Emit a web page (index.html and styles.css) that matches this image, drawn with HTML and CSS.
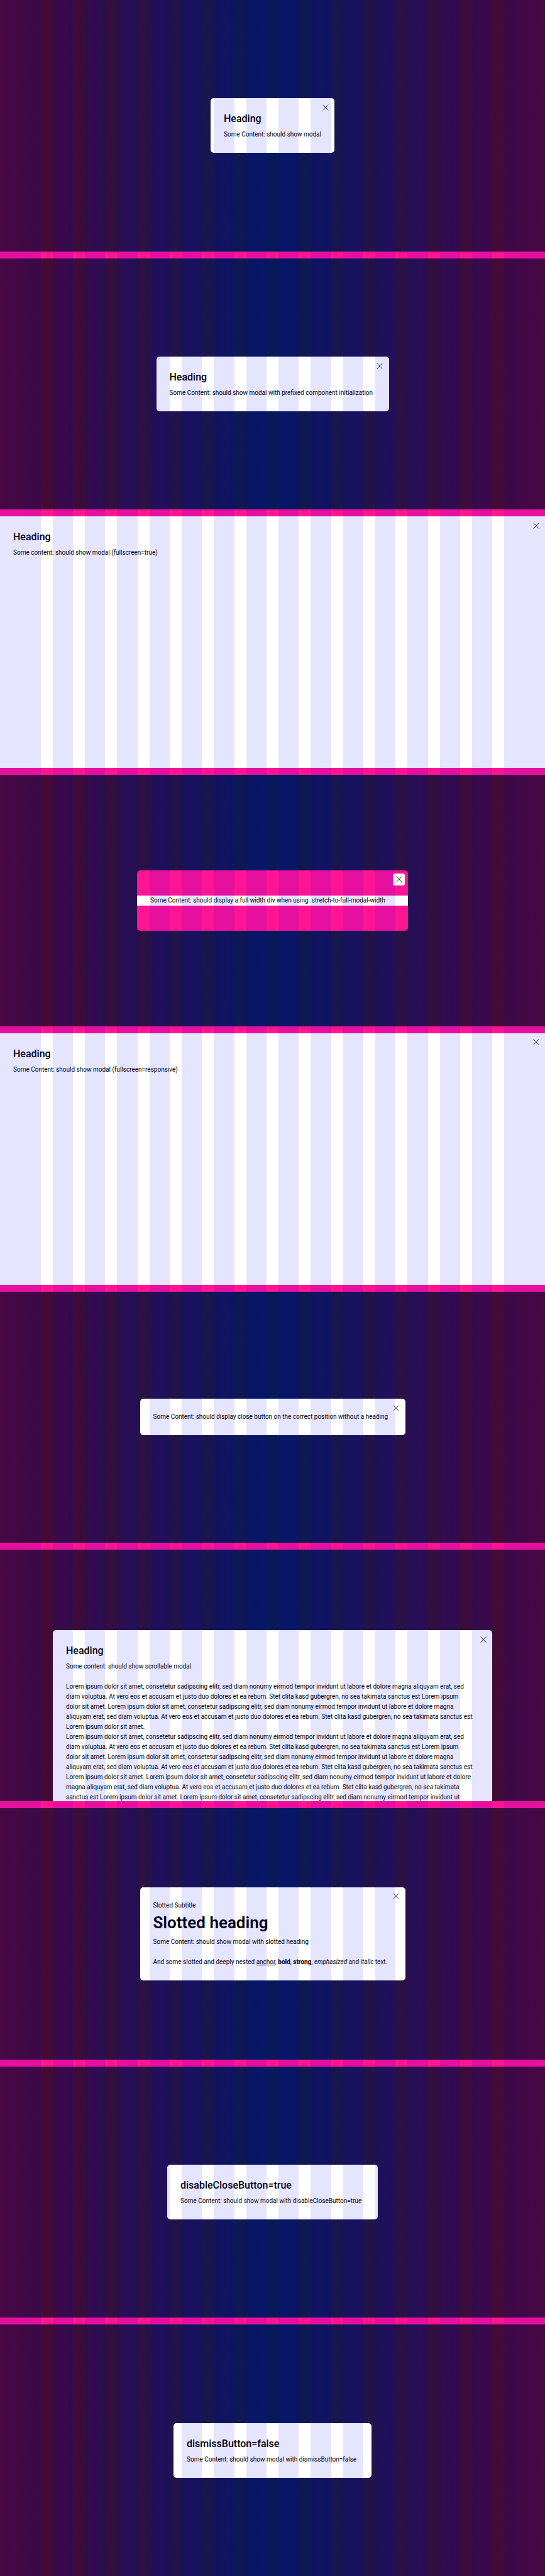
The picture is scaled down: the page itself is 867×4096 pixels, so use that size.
FILE: index.html
```html
<!DOCTYPE html>
<html lang="en">
<head>
<meta charset="utf-8">
<meta name="viewport" content="width=device-width, initial-scale=1">
<title>Modal overview</title>
<link rel="stylesheet" href="styles.css">
</head>
<body>
<svg class="sprite" aria-hidden="true"><symbol id="close" viewBox="0 0 10 10"><path d="M.7.5 9.3 9.5M9.3.5.7 9.5" fill="none" stroke="currentColor" stroke-width=".8"/></symbol></svg>
<main class="playground">
  <section class="stage">
    <div class="modal modal--xs" role="dialog" aria-label="Heading">
      <button class="close" type="button" aria-label="Close"><svg class="icon"><use href="#close"/></svg></button>
      <h2 class="heading">Heading</h2>
      <p class="text">Some Content: should show modal</p>
    </div>
  </section>
  <section class="stage">
    <div class="modal modal--m" role="dialog" aria-label="Heading">
      <button class="close" type="button" aria-label="Close"><svg class="icon"><use href="#close"/></svg></button>
      <h2 class="heading">Heading</h2>
      <p class="text">Some Content: should show modal with prefixed component initialization</p>
    </div>
  </section>
  <section class="stage stage--full">
    <div class="modal modal--full" role="dialog" aria-label="Heading">
      <button class="close" type="button" aria-label="Close"><svg class="icon"><use href="#close"/></svg></button>
      <h2 class="heading">Heading</h2>
      <p class="text">Some content: should show modal (fullscreen=true)</p>
    </div>
  </section>
  <section class="stage">
    <div class="modal modal--stretch" role="dialog" aria-label="Full width content">
      <button class="close" type="button" aria-label="Close"><svg class="icon"><use href="#close"/></svg></button>
      <p class="text text--stretch">Some Content: should display a full width div when using .stretch-to-full-modal-width</p>
    </div>
  </section>
  <section class="stage stage--full">
    <div class="modal modal--full" role="dialog" aria-label="Heading">
      <button class="close" type="button" aria-label="Close"><svg class="icon"><use href="#close"/></svg></button>
      <h2 class="heading">Heading</h2>
      <p class="text">Some Content: should show modal (fullscreen=responsive)</p>
    </div>
  </section>
  <section class="stage">
    <div class="modal modal--l" role="dialog" aria-label="Without heading">
      <button class="close" type="button" aria-label="Close"><svg class="icon"><use href="#close"/></svg></button>
      <p class="text">Some Content: should display close button on the correct position without a heading</p>
    </div>
  </section>
  <section class="stage stage--scroll">
    <div class="modal modal--scroll" role="dialog" aria-label="Heading">
      <button class="close" type="button" aria-label="Close"><svg class="icon"><use href="#close"/></svg></button>
      <h2 class="heading">Heading</h2>
      <p class="text">Some content: should show scrollable modal</p>
      <p class="text text--spaced">Lorem ipsum dolor sit amet, consetetur sadipscing elitr, sed diam nonumy eirmod tempor invidunt ut labore et dolore magna aliquyam erat, sed<br>
      diam voluptua. At vero eos et accusam et justo duo dolores et ea rebum. Stet clita kasd gubergren, no sea takimata sanctus est Lorem ipsum<br>
      dolor sit amet. Lorem ipsum dolor sit amet, consetetur sadipscing elitr, sed diam nonumy eirmod tempor invidunt ut labore et dolore magna<br>
      aliquyam erat, sed diam voluptua. At vero eos et accusam et justo duo dolores et ea rebum. Stet clita kasd gubergren, no sea takimata sanctus est<br>
      Lorem ipsum dolor sit amet.</p>
      <p class="text">Lorem ipsum dolor sit amet, consetetur sadipscing elitr, sed diam nonumy eirmod tempor invidunt ut labore et dolore magna aliquyam erat, sed<br>
      diam voluptua. At vero eos et accusam et justo duo dolores et ea rebum. Stet clita kasd gubergren, no sea takimata sanctus est Lorem ipsum<br>
      dolor sit amet. Lorem ipsum dolor sit amet, consetetur sadipscing elitr, sed diam nonumy eirmod tempor invidunt ut labore et dolore magna<br>
      aliquyam erat, sed diam voluptua. At vero eos et accusam et justo duo dolores et ea rebum. Stet clita kasd gubergren, no sea takimata sanctus est<br>
      Lorem ipsum dolor sit amet. Lorem ipsum dolor sit amet, consetetur sadipscing elitr, sed diam nonumy eirmod tempor invidunt ut labore et dolore<br>
      magna aliquyam erat, sed diam voluptua. At vero eos et accusam et justo duo dolores et ea rebum. Stet clita kasd gubergren, no sea takimata<br>
      sanctus est Lorem ipsum dolor sit amet. Lorem ipsum dolor sit amet, consetetur sadipscing elitr, sed diam nonumy eirmod tempor invidunt ut</p>
    </div>
  </section>
  <section class="stage">
    <div class="modal modal--l" role="dialog" aria-label="Slotted heading">
      <button class="close" type="button" aria-label="Close"><svg class="icon"><use href="#close"/></svg></button>
      <p class="text">Slotted Subtitle</p>
      <h2 class="heading heading--large">Slotted heading</h2>
      <p class="text">Some Content: should show modal with slotted heading</p>
      <p class="text text--spaced">And some slotted and deeply nested <a class="link" href="#">anchor</a>, <b>bold</b>, <strong>strong</strong>, <em>emphasized</em> and <i>italic</i> text.</p>
    </div>
  </section>
  <section class="stage">
    <div class="modal modal--s" role="dialog" aria-label="disableCloseButton=true">
      <h2 class="heading">disableCloseButton=true</h2>
      <p class="text">Some Content: should show modal with disableCloseButton=true</p>
    </div>
  </section>
  <section class="stage">
    <div class="modal modal--s2" role="dialog" aria-label="dismissButton=false">
      <h2 class="heading">dismissButton=false</h2>
      <p class="text">Some Content: should show modal with dismissButton=false</p>
    </div>
  </section>
  <div class="columns" aria-hidden="true"><i></i><i></i><i></i><i></i><i></i><i></i><i></i><i></i><i></i><i></i><i></i><i></i><i></i><i></i><i></i><i></i></div>
</main>
</body>
</html>
```

FILE: styles.css
```css
* { box-sizing: border-box; }

body {
  margin: 0;
  color: #010205;
  font: 10px/16px Roboto, "Liberation Sans", sans-serif;
}

.sprite { position: absolute; width: 0; height: 0; }

.playground {
  position: relative;
  display: grid;
  grid-template-rows: repeat(10, minmax(0, 1fr));
  gap: 11px;
  height: 100vh;
  background: #ff1493;
}

.stage {
  display: flex;
  align-items: center;
  justify-content: center;
  overflow: hidden;
  background: linear-gradient(to right, #4f082e, #061a57, #4f082e);
}

.stage--full { align-items: stretch; }

.stage--scroll {
  align-items: flex-start;
  padding: 128px 84px 0;
}

.modal {
  position: relative;
  padding: 21px;
  border-radius: 5px;
  background: #fff;
}

.modal--xs { min-width: 197px; }
.modal--s2 { min-width: 315px; }
.modal--s { min-width: 335px; }
.modal--m { min-width: 370px; }
.modal--l { min-width: 422px; }
.modal--full { flex: 1; border-radius: 0; }
.modal--scroll { flex: 1; }

.modal--stretch {
  min-width: 431px;
  padding: 40px 0;
  background: #ff1493;
}

.close {
  position: absolute;
  top: 5px;
  right: 5px;
  display: grid;
  place-items: center;
  width: 19px;
  height: 19px;
  padding: 0;
  border: 0;
  border-radius: 3px;
  background: #fff;
  color: inherit;
}

.icon { width: 10px; height: 10px; }

.heading {
  margin: 0 0 5px;
  font-size: 16px;
  font-weight: 500;
  line-height: 24px;
}

.heading--large {
  margin-bottom: 4px;
  font-size: 26px;
  font-weight: 600;
  line-height: 38px;
}

.text { margin: 0; }
.text--spaced { margin-top: 16px; }

.text--stretch {
  padding: 0 21px;
  background: #fff;
}

.link { color: inherit; }

.columns {
  position: absolute;
  inset: 0;
  display: grid;
  grid-template-columns: 2fr repeat(14, 1fr) 2fr;
  column-gap: 19px;
  pointer-events: none;
}

.columns i { background: rgba(0, 0, 255, .1); }
```
